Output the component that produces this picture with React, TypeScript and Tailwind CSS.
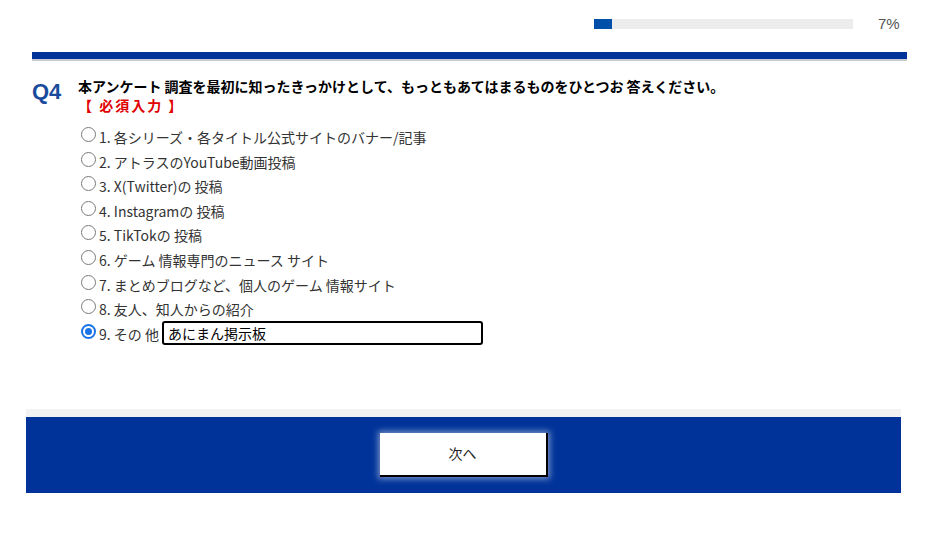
const options = [
  '1. 各シリーズ・各タイトル公式サイトのバナー/記事',
  '2. アトラスのYouTube動画投稿',
  '3. X(Twitter)の 投稿',
  '4. Instagramの 投稿',
  '5. TikTokの 投稿',
  '6. ゲーム 情報専門のニュース サイト',
  '7. まとめブログなど、個人のゲーム 情報サイト',
  '8. 友人、知人からの紹介',
];

function Radio({ checked }: { checked?: boolean }) {
  if (checked) {
    return (
      <span className="block w-[15px] h-[15px] rounded-full border-2 border-[#1a73e8] flex items-center justify-center shrink-0">
        <span className="block w-[7px] h-[7px] rounded-full bg-[#1a73e8]" />
      </span>
    );
  }
  return <span className="block w-[15px] h-[15px] rounded-full border border-[#7a7a7a] bg-white shrink-0" />;
}

export default function App() {
  return (
    <div
      className="w-[929px] h-[535px] bg-white text-[#333]"
      style={{ fontFamily: '"Noto Sans CJK JP", "Liberation Sans", sans-serif' }}
    >
      <div className="ml-[32px] w-[875px]">
        <div className="h-[52px] flex items-center pb-[4px]">
          <div className="ml-[562px] w-[259px] h-[10px] bg-[#ececec]">
            <div className="w-[18px] h-full bg-[#0050aa]" />
          </div>
          <span
            className="ml-[25px] text-[15px] text-[#555]"
            style={{ fontFamily: '"Liberation Sans", sans-serif' }}
          >
            7%
          </span>
        </div>
        <div className="h-[7px] bg-[#003399]" />
        <div className="h-[2px] bg-[#c8ccd1]" />

        <div className="flex mt-[15px]">
          <div
            className="w-[46px] text-[22px] font-bold text-[#1a4a9c] leading-none pt-[5px]"
            style={{ fontFamily: '"Liberation Sans", sans-serif' }}
          >
            Q4
          </div>
          <div>
            <p className="text-[14px] font-bold text-black leading-[20px]">
              本アンケート 調査を最初に知ったきっかけとして、もっともあてはまるものをひとつお 答えください。
            </p>
            <p className="text-[14px] font-bold text-[#e00000] leading-[18px] tracking-[2px]">【 必須入力 】</p>
          </div>
        </div>

        <div className="ml-[49px] mt-[10px] flex flex-col">
          {options.map((o) => (
            <div key={o} className="h-[24.6px] flex items-start gap-[3px]">
              <span className="mt-[3px]"><Radio /></span>
              <span className="text-[14px] leading-[18px] mt-[4px]">{o}</span>
            </div>
          ))}
          <div className="h-[25px] flex items-start gap-[3px]">
            <span className="mt-[3px]"><Radio checked /></span>
            <span className="text-[14px] leading-[18px] mt-[4px]">9. その 他</span>
            <div className="w-[321px] h-[24px] border-2 border-black rounded-[3px] text-[14px] text-black leading-[20px] px-[4px]">
              あにまん掲示板
            </div>
          </div>
        </div>
      </div>

      <div className="ml-[26px] w-[875px] mt-[63px]">
        <div className="h-[8px] bg-[#f2f2f2]" />
        <div className="h-[76px] bg-[#003399] flex justify-center items-start pt-[16px]">
          <button className="w-[168px] h-[44px] bg-white border-r-2 border-b-2 border-black text-[14px] text-[#222] shadow-[0_0_6px_2px_rgba(255,255,255,0.45)]">
            次へ
          </button>
        </div>
      </div>
    </div>
  );
}
